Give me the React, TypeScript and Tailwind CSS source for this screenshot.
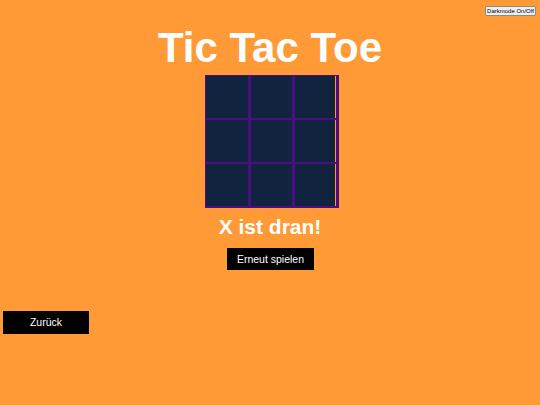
import React from "react";

const Row = () => (
  <div className="flex h-[42px]">
    <div className="w-[42px] bg-[#12233f]" />
    <div className="w-[3px] bg-[#4a0e82]" />
    <div className="w-[41px] bg-[#12233f]" />
    <div className="w-[3px] bg-[#4a0e82]" />
    <div className="w-[40px] bg-[#12233f]" />
    <div className="w-[1px] bg-[#ff9a36]" />
  </div>
);

export default function App() {
  return (
    <div
      className="relative w-[540px] h-[405px] bg-[#ff9a36] flex flex-col overflow-hidden"
      style={{ fontFamily: '"Liberation Sans", Arial, sans-serif' }}
    >
      <button className="absolute right-[4px] top-[6px] h-[10px] px-[1px] bg-[#efefef] border border-[#8a8a8a] rounded-[1px] text-[6px] leading-none text-black">
        Darkmode On/Off
      </button>
      <h1 className="text-center text-white font-bold text-[42px] leading-none mt-[27px]">
        Tic Tac Toe
      </h1>
      <div className="flex justify-center mt-[6px]">
        <div className="ml-[3px] flex">
          <div className="flex flex-col bg-[#4a0e82] pl-[1px] pt-[1px] gap-[2px] pb-[2px]">
            <Row />
            <Row />
            <Row />
          </div>
          <div className="w-[3px] bg-[#4a0e82]" />
        </div>
      </div>
      <div className="text-center text-white font-bold text-[21px] leading-none mt-[8px]">
        X ist dran!
      </div>
      <div className="flex justify-center mt-[11px]">
        <button className="ml-[1px] w-[87px] h-[22px] bg-black text-white text-[10.5px] leading-none">
          Erneut spielen
        </button>
      </div>
      <div className="mt-[39px] ml-[3px]">
        <button className="w-[86px] h-[23px] bg-black text-white text-[10.5px] leading-none">
          Zurück
        </button>
      </div>
    </div>
  );
}
